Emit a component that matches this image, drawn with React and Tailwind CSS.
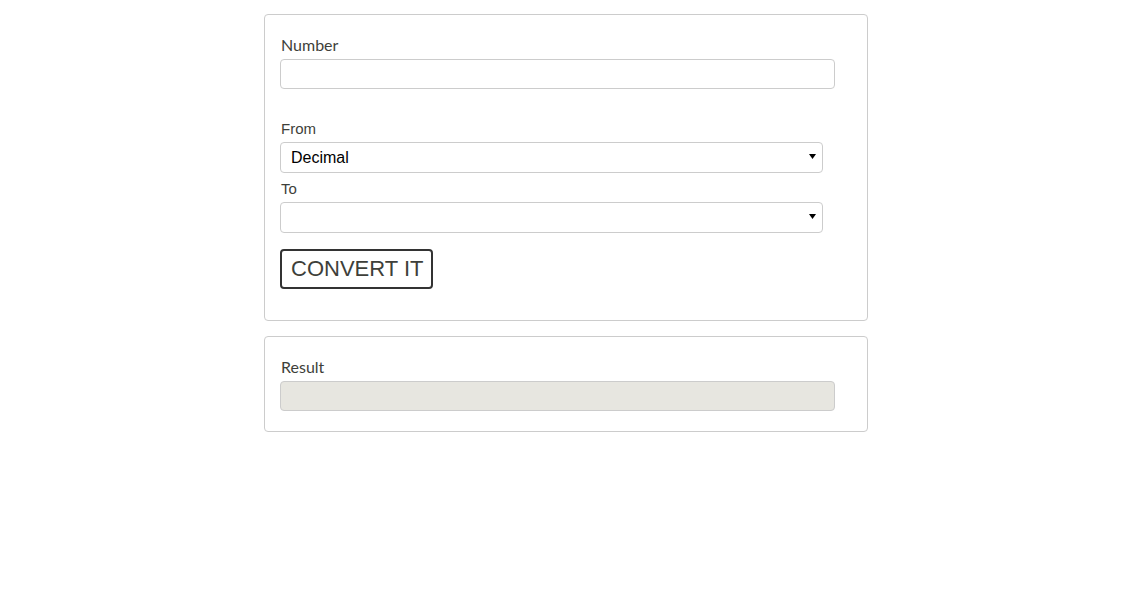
import React from "react";

function Arrow() {
  return (
    <svg className="pointer-events-none absolute left-[529px] top-[12px]" width="7" height="5" viewBox="0 0 7 5">
      <polygon points="0,0 7,0 3.5,5" fill="#000" />
    </svg>
  );
}

export default function App() {
  return (
    <div className="min-h-[608px] w-full bg-white pt-[14px]">
      <div className="ml-[264px] w-[604px]">
        <div className="rounded-[4px] border border-[#cccccc] px-[15px] pt-[19px] pb-[31px]">
          <label className="block font-['Lato',sans-serif] text-[16px] leading-[21px] text-[#3e3f3a] mb-[4px] pl-[1px]">
            Number
          </label>
          <input
            type="text"
            className="block h-[30px] w-[555px] rounded-[4px] border border-[#cccccc] bg-white px-[10px] outline-none"
          />
          <label className="mt-[29px] block font-['Liberation_Sans',Arial,sans-serif] text-[15px] leading-[21px] text-[#3e3f3a] mb-[3px] pl-[1px]">
            From
          </label>
          <div className="relative w-[543px]">
            <select className="block h-[31px] w-[543px] appearance-none rounded-[4px] border border-[#cccccc] bg-white pl-[10px] font-['Liberation_Sans',Arial,sans-serif] text-[16px] text-black outline-none">
              <option>Decimal</option>
            </select>
            <Arrow />
          </div>
          <label className="mt-[5px] block font-['Liberation_Sans',Arial,sans-serif] text-[15px] leading-[21px] text-[#3e3f3a] mb-[3px] pl-[1px]">
            To
          </label>
          <div className="relative w-[543px]">
            <select className="block h-[31px] w-[543px] appearance-none rounded-[4px] border border-[#cccccc] bg-white pl-[10px] font-['Liberation_Sans',Arial,sans-serif] text-[16px] text-black outline-none">
              <option></option>
            </select>
            <Arrow />
          </div>
          <button className="mt-[16px] block h-[40px] w-[153px] rounded-[4px] border-2 border-[#333333] bg-white pl-[9px] pr-[7px] text-left font-['Liberation_Sans',Arial,sans-serif] text-[22px] leading-[26px] text-[#3e3f3a]">
            CONVERT IT
          </button>
        </div>
        <div className="mt-[15px] rounded-[4px] border border-[#cccccc] px-[15px] pt-[19px] pb-[20px]">
          <label className="block font-['Lato',sans-serif] text-[16px] leading-[21px] text-[#3e3f3a] mb-[4px] pl-[1px]">
            Result
          </label>
          <input
            type="text"
            disabled
            className="block h-[30px] w-[555px] rounded-[4px] border border-[#cccccc] bg-[#e7e6e0] px-[10px] outline-none"
          />
        </div>
      </div>
    </div>
  );
}
